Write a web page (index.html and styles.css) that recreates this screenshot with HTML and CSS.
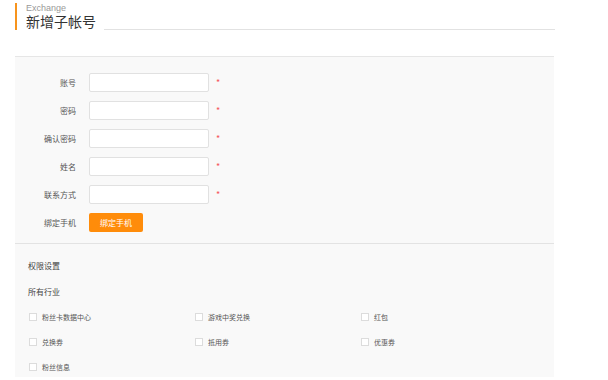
FILE: index.html
```html
<!DOCTYPE html>
<html lang="en">
<head>
    <meta charset="UTF-8">
    <title>新增子帐号</title>
    <link rel="stylesheet" href="styles.css">
</head>
<body>
    <div class="page-head">
        <div class="title-box">
            <span class="sub">Exchange</span>
            <h1>新增子帐号</h1>
        </div>
        <div class="title-line"></div>
    </div>

    <div class="panel">
        <div class="form">
            <div class="row">
                <label>账号</label>
                <input type="text">
                <span class="req">*</span>
            </div>
            <div class="row">
                <label>密码</label>
                <input type="password">
                <span class="req">*</span>
            </div>
            <div class="row">
                <label>确认密码</label>
                <input type="password">
                <span class="req">*</span>
            </div>
            <div class="row">
                <label>姓名</label>
                <input type="text">
                <span class="req">*</span>
            </div>
            <div class="row">
                <label>联系方式</label>
                <input type="text">
                <span class="req">*</span>
            </div>
            <div class="row">
                <label>绑定手机</label>
                <button class="btn">绑定手机</button>
            </div>
        </div>

        <div class="perm">
            <h3>权限设置</h3>
            <h4>所有行业</h4>
            <div class="checks">
                <label class="chk"><span class="box"></span>粉丝卡数据中心</label>
                <label class="chk"><span class="box"></span>游戏中奖兑换</label>
                <label class="chk"><span class="box"></span>红包</label>
                <label class="chk"><span class="box"></span>兑换券</label>
                <label class="chk"><span class="box"></span>抵用券</label>
                <label class="chk"><span class="box"></span>优惠券</label>
                <label class="chk"><span class="box"></span>粉丝信息</label>
            </div>
        </div>
    </div>
</body>
</html>
```
FILE: styles.css
```css
* { box-sizing: border-box; }

body {
    margin: 0;
    font-family: "Noto Sans CJK SC", "Open Sans", sans-serif;
    color: #333;
    background: #fff;
}

/* header */
.page-head {
    display: flex;
    align-items: flex-end;
    width: 540px;
    margin: 3px 0 0 15px;
}

.title-box {
    border-left: 2px solid #f7941d;
    padding: 0 8px 0 9px;
    height: 27px;
}

.title-box .sub {
    display: block;
    font-family: "Liberation Sans", sans-serif;
    font-size: 9px;
    line-height: 10px;
    color: #999;
}

.title-box h1 {
    margin: 1px 0 0;
    font-family: "Liberation Sans", "Noto Sans CJK SC", sans-serif;
    font-size: 14px;
    line-height: 16px;
    font-weight: normal;
    color: #333;
}

.title-line {
    flex: 1;
    height: 1px;
    background: #e2e2e2;
}

/* panel */
.panel {
    width: 539px;
    margin: 26px 0 0 15px;
    background: #f9f9f9;
    border-top: 1px solid #e6e6e6;
}

.form {
    padding: 11px 0 7px;
    border-bottom: 1px solid #e3e3e3;
}

.row {
    display: flex;
    align-items: center;
    height: 28px;
}

.row label {
    width: 61px;
    text-align: right;
    font-size: 8px;
    color: #555;
    margin-right: 13px;
}

.row input {
    width: 120px;
    height: 19px;
    border: 1px solid #e1e1e1;
    border-radius: 2px;
    background: #fff;
    outline: none;
}

.req {
    margin-left: 7px;
    color: #f5565a;
    font-size: 9px;
    line-height: 1;
}

.btn {
    width: 54px;
    height: 19px;
    border: none;
    border-radius: 2px;
    background: #ff8c0a;
    color: #fff;
    font-family: inherit;
    font-size: 8px;
    padding: 0;
}

/* permissions */
.perm {
    padding: 16px 13px 4px;
}

.perm h3,
.perm h4 {
    margin: 0;
    font-size: 8px;
    font-weight: normal;
    color: #444;
    line-height: 12px;
}

.perm h4 {
    margin-top: 14px;
}

.checks {
    display: grid;
    grid-template-columns: 166px 166px 166px;
    row-gap: 13px;
    margin-top: 13px;
}

.chk {
    display: flex;
    align-items: center;
    font-size: 7px;
    color: #555;
    line-height: 12px;
}

.chk .box {
    width: 8px;
    height: 8px;
    border: 1px solid #dcdcdc;
    background: #fff;
    margin: 0 5px 0 1px;
}
```
